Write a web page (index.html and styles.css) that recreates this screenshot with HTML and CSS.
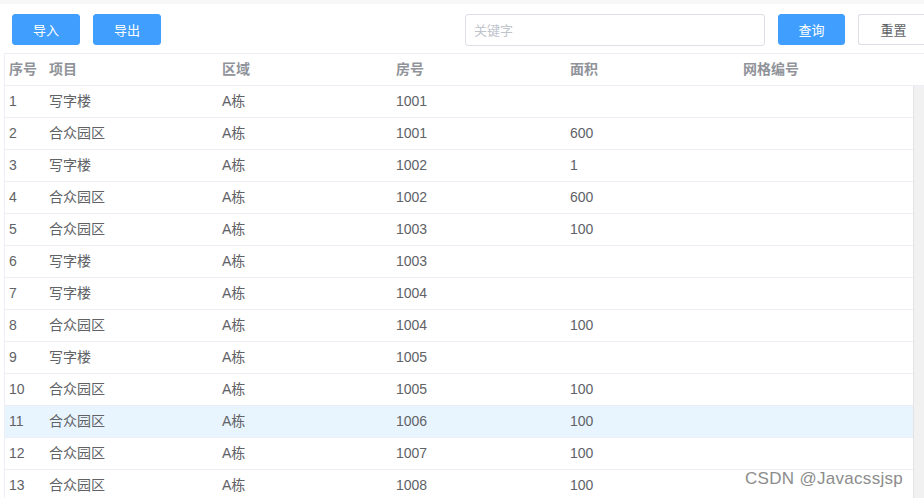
FILE: index.html
```html
<!DOCTYPE html>
<html lang="zh-CN">
<head>
  <meta charset="UTF-8">
  <title>房屋列表</title>
  <link rel="stylesheet" href="styles.css">
</head>
<body>
  <div class="strip"></div>
  <div class="toolbar">
    <button class="btn primary">导入</button>
    <button class="btn primary">导出</button>
    <div class="spacer"></div>
    <input class="keyword" type="text" placeholder="关键字">
    <button class="btn primary query">查询</button>
    <button class="btn plain">重置</button>
  </div>

  <div class="table">
    <div class="thead">
      <div class="row">
        <div class="cell">序号</div>
        <div class="cell">项目</div>
        <div class="cell">区域</div>
        <div class="cell">房号</div>
        <div class="cell">面积</div>
        <div class="cell">网格编号</div>
      </div>
    </div>
    <div class="tbody">
      <div class="rows">
        <div class="row"><div class="cell">1</div><div class="cell">写字楼</div><div class="cell">A栋</div><div class="cell">1001</div><div class="cell"></div><div class="cell"></div></div>
        <div class="row"><div class="cell">2</div><div class="cell">合众园区</div><div class="cell">A栋</div><div class="cell">1001</div><div class="cell">600</div><div class="cell"></div></div>
        <div class="row"><div class="cell">3</div><div class="cell">写字楼</div><div class="cell">A栋</div><div class="cell">1002</div><div class="cell">1</div><div class="cell"></div></div>
        <div class="row"><div class="cell">4</div><div class="cell">合众园区</div><div class="cell">A栋</div><div class="cell">1002</div><div class="cell">600</div><div class="cell"></div></div>
        <div class="row"><div class="cell">5</div><div class="cell">合众园区</div><div class="cell">A栋</div><div class="cell">1003</div><div class="cell">100</div><div class="cell"></div></div>
        <div class="row"><div class="cell">6</div><div class="cell">写字楼</div><div class="cell">A栋</div><div class="cell">1003</div><div class="cell"></div><div class="cell"></div></div>
        <div class="row"><div class="cell">7</div><div class="cell">写字楼</div><div class="cell">A栋</div><div class="cell">1004</div><div class="cell"></div><div class="cell"></div></div>
        <div class="row"><div class="cell">8</div><div class="cell">合众园区</div><div class="cell">A栋</div><div class="cell">1004</div><div class="cell">100</div><div class="cell"></div></div>
        <div class="row"><div class="cell">9</div><div class="cell">写字楼</div><div class="cell">A栋</div><div class="cell">1005</div><div class="cell"></div><div class="cell"></div></div>
        <div class="row"><div class="cell">10</div><div class="cell">合众园区</div><div class="cell">A栋</div><div class="cell">1005</div><div class="cell">100</div><div class="cell"></div></div>
        <div class="row hover"><div class="cell">11</div><div class="cell">合众园区</div><div class="cell">A栋</div><div class="cell">1006</div><div class="cell">100</div><div class="cell"></div></div>
        <div class="row"><div class="cell">12</div><div class="cell">合众园区</div><div class="cell">A栋</div><div class="cell">1007</div><div class="cell">100</div><div class="cell"></div></div>
        <div class="row"><div class="cell">13</div><div class="cell">合众园区</div><div class="cell">A栋</div><div class="cell">1008</div><div class="cell">100</div><div class="cell"></div></div>
      </div>
      <div class="gutter"></div>
    </div>
  </div>

  <div class="watermark">CSDN @Javacssjsp</div>
</body>
</html>
```

FILE: styles.css
```css
html, body {
  margin: 0;
  height: 100%;
  overflow: hidden;
}
body {
  font-family: "Liberation Sans", "Noto Sans CJK SC", sans-serif;
  font-size: 14px;
  color: #606266;
  background: #fff;
  position: relative;
}
.strip {
  height: 4px;
  background: #f7f7f7;
}
.toolbar {
  display: flex;
  align-items: center;
  padding: 9px 0 0 12px;
  height: 32px;
}
.spacer {
  flex: 1;
}
.btn {
  font-family: inherit;
  font-size: 13px;
  height: 31px;
  width: 68px;
  border-radius: 3px;
  cursor: pointer;
  margin: 0;
  padding: 0;
}
.btn.primary {
  background: #409eff;
  border: 1px solid #409eff;
  color: #fff;
}
.btn.primary + .btn.primary {
  margin-left: 13px;
}
.btn.query {
  width: 67px;
  margin-right: 13px;
}
.btn.plain {
  background: #fff;
  border: 1px solid #dcdfe6;
  border-right: none;
  border-radius: 3px 0 0 3px;
  color: #606266;
  width: 66px;
  padding-left: 4px;
}
.keyword {
  box-sizing: border-box;
  width: 300px;
  height: 32px;
  margin: 2px 13px 0 0;
  border: 1px solid #dcdfe6;
  border-radius: 3px;
  padding: 0 8px;
  font-family: inherit;
  font-size: 13px;
  color: #606266;
  outline: none;
}
.keyword::placeholder {
  color: #c0c4cc;
}
.table {
  margin: 8px 0 0 4px;
  border-top: 1px solid #ebeef5;
  border-left: 1px solid #ebeef5;
}
.row {
  display: grid;
  grid-template-columns: 40px 173px 174px 174px 173px 174px;
  height: 31px;
  border-bottom: 1px solid #ebeef5;
}
.cell {
  padding-left: 4px;
  line-height: 31px;
  white-space: nowrap;
}
.thead .row {
  grid-template-columns: 40px 173px 174px 174px 173px 1fr;
  color: #909399;
  font-weight: bold;
}
.tbody {
  display: flex;
}
.rows {
  width: 908px;
}
.row.hover {
  background: #e9f5fe;
}
.gutter {
  flex: 1;
  background: #f1f1f1;
  border-left: 1px solid #e4e4e4;
}
.watermark {
  position: absolute;
  left: 745px;
  top: 469px;
  font-size: 17px;
  color: #8c8c8c;
  text-shadow: 1px 1px 0 #fff;
  letter-spacing: 0.3px;
}
```
